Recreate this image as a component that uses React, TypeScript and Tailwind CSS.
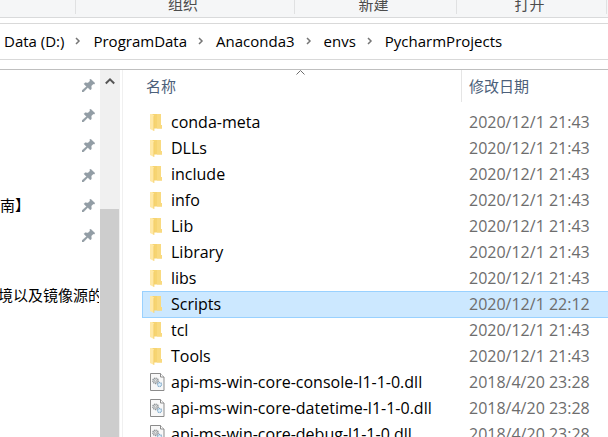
type Entry = { name: string; date: string; kind: 'folder' | 'dll'; selected?: boolean };

const folderDate = '2020/12/1 21:43';
const dllDate = '2018/4/20 23:28';

const entries: Entry[] = [
  { name: 'conda-meta', date: folderDate, kind: 'folder' },
  { name: 'DLLs', date: folderDate, kind: 'folder' },
  { name: 'include', date: folderDate, kind: 'folder' },
  { name: 'info', date: folderDate, kind: 'folder' },
  { name: 'Lib', date: folderDate, kind: 'folder' },
  { name: 'Library', date: folderDate, kind: 'folder' },
  { name: 'libs', date: folderDate, kind: 'folder' },
  { name: 'Scripts', date: '2020/12/1 22:12', kind: 'folder', selected: true },
  { name: 'tcl', date: folderDate, kind: 'folder' },
  { name: 'Tools', date: folderDate, kind: 'folder' },
  { name: 'api-ms-win-core-console-l1-1-0.dll', date: dllDate, kind: 'dll' },
  { name: 'api-ms-win-core-datetime-l1-1-0.dll', date: dllDate, kind: 'dll' },
  { name: 'api-ms-win-core-debug-l1-1-0.dll', date: dllDate, kind: 'dll' },
];

const crumbs = ['Data (D:)', 'ProgramData', 'Anaconda3', 'envs', 'PycharmProjects'];

const pinned = ['', '', '', '', '南】', ''];

function FolderIcon() {
  return (
    <svg width="16" height="18" viewBox="0 0 16 18" aria-hidden="true" className="shrink-0">
      <path d="M2 1h9v11h1v3.500H4z" fill="#f6d472" />
      <path d="M7 1h4v11h1v3.500H7z" fill="#f9da80" />
      <path d="M0 1h2l2 1.500V18l-4-2z" fill="#ffe8a6" />
      <path d="M3.500 3l.8.500v14.500l-.8-.4z" fill="#f3cb62" />
    </svg>
  );
}

function DllIcon() {
  return (
    <svg width="16" height="18" viewBox="0 0 16 18" aria-hidden="true" className="shrink-0">
      <path d="M.5.500h10l3.500 3.500v13.500H.5z" fill="#f8f8f8" stroke="#8b8b8b" />
      <path d="M10.500.500v3.500h3.500" fill="#fff" stroke="#8b8b8b" />
      <circle cx="5.500" cy="7.800" r="2.700" fill="#d8dadb" stroke="#8d9396" strokeWidth="1.400" strokeDasharray="1.200 .6" />
      <circle cx="5.500" cy="7.800" r="1" fill="#fff" stroke="#8d9396" strokeWidth=".6" />
      <circle cx="9.500" cy="11.500" r="2" fill="#e4f3fc" stroke="#7fa9c9" strokeWidth="1.300" strokeDasharray="1.100 .5" />
    </svg>
  );
}

function PinIcon() {
  return (
    <svg width="13" height="13" viewBox="0 0 13 13" aria-hidden="true" className="shrink-0">
      <path
        d="M8.500 0L13 4.300l-.8.800-1-.2-2 2.100.2 2.800-1 1.200-2.600-2.600L1.400 13H0v-1.400l4.500-4.200L2 4.900l1-1.200 2.900.2L8.100 2l-.3-1.200z"
        fill="#929da5"
        stroke="#929da5"
        strokeWidth=".4"
      />
    </svg>
  );
}

function Crumb({ text, last }: { text: string; last: boolean }) {
  return (
    <li className="flex items-center">
      <button type="button" className="leading-5">{text}</button>
      {!last && (
        <svg width="29" height="8" viewBox="0 0 29 8" aria-hidden="true">
          <path d="M12 1l3 3-3 3" fill="none" stroke="#767676" strokeWidth="1.500" />
        </svg>
      )}
    </li>
  );
}

function Row({ entry }: { entry: Entry }) {
  const on = entry.selected;
  return (
    <tr className={on ? 'bg-[#cce8ff]' : ''} aria-selected={!!on}>
      <td className={`h-[26px] p-0 ${on ? 'shadow-[inset_1px_1px_#99d1ff,0_1px_#99d1ff]' : ''}`}>
        <div className="flex items-center gap-[5px] pl-2 leading-[26px] text-black">
          {entry.kind === 'folder' ? <FolderIcon /> : <DllIcon />}
          <span className="whitespace-nowrap">{entry.name}</span>
        </div>
      </td>
      <td
        className={`h-[26px] whitespace-nowrap p-0 pl-[7px] leading-[26px] text-[#6d6d6d] ${
          on ? 'shadow-[inset_0_1px_#99d1ff,0_1px_#99d1ff]' : ''
        }`}
      >
        {entry.date}
      </td>
    </tr>
  );
}

export default function App() {
  return (
    <div className="flex h-screen flex-col overflow-hidden bg-white font-['Open_Sans','Noto_Sans_CJK_SC',sans-serif] text-[15px] text-black">
      <header className="flex h-[18px] shrink-0 overflow-hidden border-b border-[#d9dadb] bg-[#f5f6f7] text-[#4c4c4c]">
        <div className="h-3.5 w-[76px] shrink-0 border-r border-[#e0e1e2]" />
        {[
          { label: '组织', width: 'w-[219px]' },
          { label: '新建', width: 'w-[162px]' },
          { label: '打开', width: 'w-[150px]' },
        ].map((g) => (
          <div key={g.label} className={`flex h-3.5 shrink-0 items-end justify-center border-r border-[#e0e1e2] pr-1 ${g.width}`}>
            <span className="leading-5">{g.label}</span>
          </div>
        ))}
      </header>

      <nav aria-label="Address" className="mt-[5px] h-[37px] shrink-0 border-y border-[#d9d9d9]">
        <ol className="flex h-full items-center whitespace-nowrap pb-px pl-1">
          {crumbs.map((c, i) => (
            <Crumb key={c} text={c} last={i === crumbs.length - 1} />
          ))}
        </ol>
      </nav>

      <div className="mt-[9px] flex min-h-0 flex-1 border-t border-[#bfbfbf]">
        <aside className="mr-px w-[99px] shrink-0 overflow-hidden">
          <ul>
            {pinned.map((label, i) => (
              <li key={i} className="flex h-[30px] items-center justify-between pr-1">
                <span className="whitespace-nowrap">{label}</span>
                <PinIcon />
              </li>
            ))}
            <li className="h-[30px]" />
            <li className="flex h-[30px] items-center whitespace-nowrap">
              <span className="-ml-0.5">境以及镜像源的</span>
            </li>
          </ul>
        </aside>

        <div className="flex w-5 shrink-0 flex-col bg-[#f0f0f0]">
          <button type="button" aria-label="Scroll up" className="flex h-[21px] items-center justify-center">
            <svg width="10" height="8" viewBox="0 0 10 8" aria-hidden="true">
              <path d="M.8 6.500L5 2.300l4.200 4.200" fill="none" stroke="#555" strokeWidth="2" />
            </svg>
          </button>
          <div className="mr-px mt-[118px] flex-1 bg-[#cdcdcd]" />
        </div>

        <main className="ml-0.5 min-w-0 flex-1 overflow-hidden border-l border-[#f0f0f0] pl-[19px]">
          <table className="w-full table-fixed border-collapse text-left">
            <colgroup>
              <col className="w-[320px]" />
              <col />
            </colgroup>
            <thead className="text-[#4c607a]">
              <tr>
                <th className="p-0 pb-[7px] align-top font-normal" aria-sort="ascending">
                  <div className="relative flex h-8 items-center border-r border-[#e5e5e5] pl-1">
                    <svg width="9" height="5" viewBox="0 0 9 5" aria-hidden="true" className="absolute left-[154px] top-0">
                      <path d="M.5 4.500l4-4 4 4" fill="none" stroke="#6d6d6d" />
                    </svg>
                    名称
                  </div>
                </th>
                <th className="p-0 pb-[7px] align-top font-normal">
                  <div className="flex h-8 items-center pl-[7px]">修改日期</div>
                </th>
              </tr>
            </thead>
            <tbody className="text-base">
              {entries.map((e) => (
                <Row key={e.name} entry={e} />
              ))}
            </tbody>
          </table>
        </main>
      </div>
    </div>
  );
}
